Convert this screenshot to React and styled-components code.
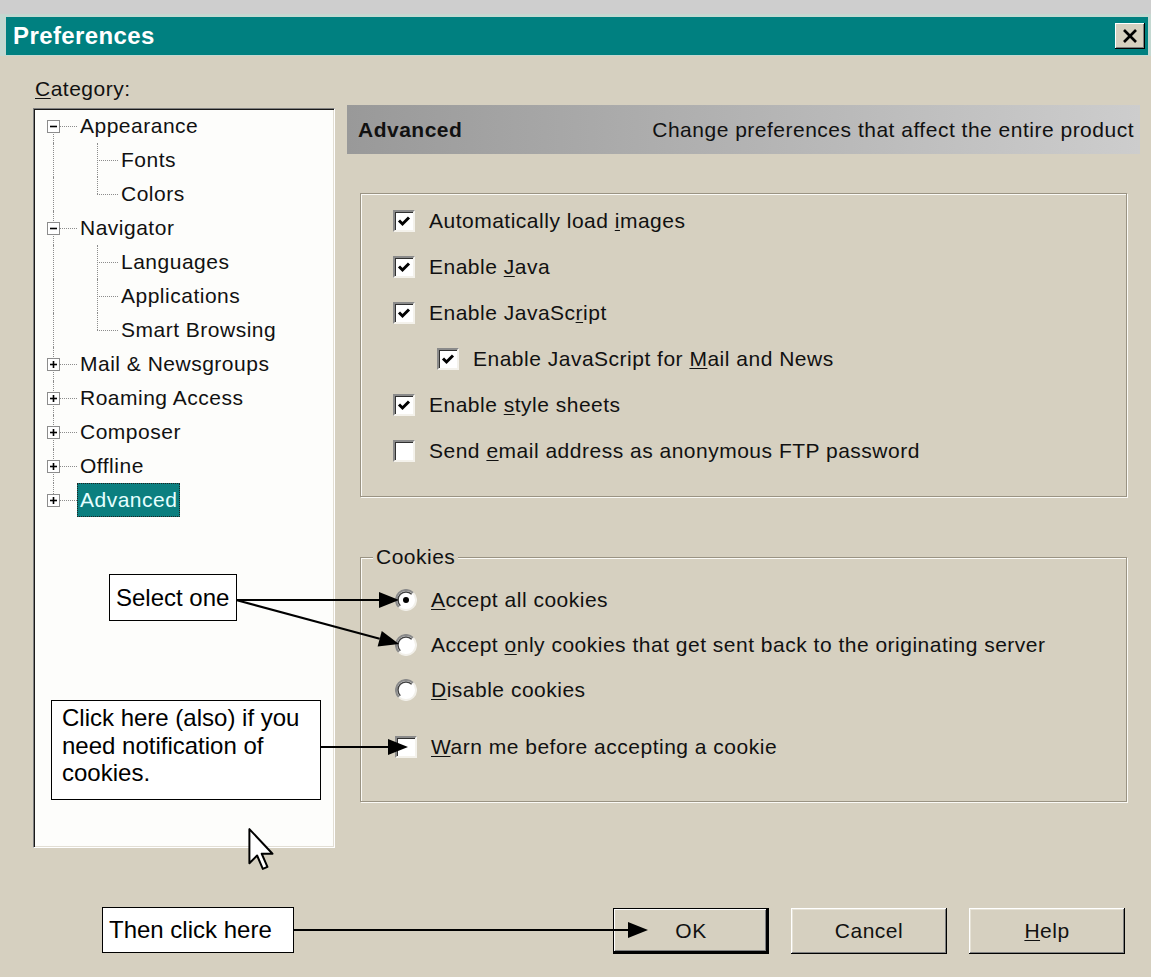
import React from 'react'
import styled, { createGlobalStyle, css } from 'styled-components'

const GlobalStyle = createGlobalStyle`
  html, body { margin: 0; padding: 0; }
  body {
    width: 1151px;
    height: 977px;
    overflow: hidden;
    background: #d6d0c0;
    font-family: "Liberation Sans", Arial, sans-serif;
    color: #111;
  }
`

const tree = [
  { label: 'Appearance', open: true, children: ['Fonts', 'Colors'] },
  { label: 'Navigator', open: true, children: ['Languages', 'Applications', 'Smart Browsing'] },
  { label: 'Mail & Newsgroups' },
  { label: 'Roaming Access' },
  { label: 'Composer' },
  { label: 'Offline' },
  { label: 'Advanced', selected: true },
]

const Checkmark = () => (
  <svg width="14" height="14" viewBox="0 0 14 14">
    <polyline points="2,6.5 5.5,10 12,3.5" fill="none" stroke="#000" strokeWidth="3" />
  </svg>
)

const CheckBox = ({ checked }) => <Box>{checked && <Checkmark />}</Box>

const Radio = ({ checked }) => (
  <svg width="22" height="22" viewBox="0 0 22 22" style={{ flex: 'none' }}>
    <circle cx="11" cy="11" r="10" fill="#fff" />
    <path d="M3.9 18.1 A10 10 0 0 1 18.1 3.9" stroke="#8a8a8a" strokeWidth="2" fill="none" />
    <path d="M5.3 16.7 A8 8 0 0 1 16.7 5.3" stroke="#404040" strokeWidth="1.5" fill="none" />
    <path d="M18.1 3.9 A10 10 0 0 1 3.9 18.1" stroke="#f2f0ea" strokeWidth="2" fill="none" />
    {checked && <circle cx="11" cy="11" r="3" fill="#000" />}
  </svg>
)

const Expander = ({ open }) => (
  <ExpBox>
    <svg width="9" height="9" viewBox="0 0 9 9">
      <line x1="1" y1="4.5" x2="8" y2="4.5" stroke="#000" strokeWidth="1.6" />
      {!open && <line x1="4.5" y1="1" x2="4.5" y2="8" stroke="#000" strokeWidth="1.6" />}
    </svg>
  </ExpBox>
)

const Arrow = ({ x1, y1, x2, y2 }) => {
  const a = Math.atan2(y2 - y1, x2 - x1)
  const len = 20
  const half = 8
  const bx = x2 - len * Math.cos(a)
  const by = y2 - len * Math.sin(a)
  const px = half * Math.sin(a)
  const py = -half * Math.cos(a)
  return (
    <g>
      <line x1={x1} y1={y1} x2={bx} y2={by} stroke="#000" strokeWidth="2" />
      <polygon points={`${x2},${y2} ${bx + px},${by + py} ${bx - px},${by - py}`} fill="#000" />
    </g>
  )
}

const Cursor = () => (
  <CursorWrap>
    <svg width="27" height="44" viewBox="0 0 12 20">
      <path d="M0.5 0.5 L0.5 16 L4 12.5 L6.6 18.6 L8.7 17.7 L6.1 11.7 L11 11.7 Z" fill="#fff" stroke="#000" strokeWidth="0.9" strokeLinejoin="round" />
    </svg>
  </CursorWrap>
)

const App = () => {
  return (
    <Page>
      <GlobalStyle />
      <TopStrip />
      <TitleFrame>
        <TitleBar>
          <Title>Preferences</Title>
          <CloseButton>
            <svg width="16" height="14" viewBox="0 0 16 14">
              <line x1="2" y1="1" x2="14" y2="13" stroke="#000" strokeWidth="2.6" />
              <line x1="14" y1="1" x2="2" y2="13" stroke="#000" strokeWidth="2.6" />
            </svg>
          </CloseButton>
        </TitleBar>
      </TitleFrame>

      <Body>
        <LeftCol>
          <CategoryLabel><U>C</U>ategory:</CategoryLabel>
          <TreeBox>
            {tree.map((node, i) => {
              const trunk = i === 0 ? 'bottom' : i === tree.length - 1 ? 'top' : 'full'
              const kids = node.children || []
              return (
                <React.Fragment key={node.label}>
                  <TreeRow>
                    <Gutter $w={13} $x={6} $line={trunk}>
                      <Expander open={node.open} />
                    </Gutter>
                    <Gutter $w={17} $x={0} $line="none" $branch />
                    <NodeLabel $selected={node.selected}>{node.label}</NodeLabel>
                  </TreeRow>
                  {kids.map((kid, j) => (
                    <TreeRow key={kid}>
                      <Gutter $w={13} $x={6} $line={i === tree.length - 1 ? 'none' : 'full'} />
                      <Spacer />
                      <Gutter $w={27} $x={6} $line={j === kids.length - 1 ? 'top' : 'full'} $branch />
                      <NodeLabel>{kid}</NodeLabel>
                    </TreeRow>
                  ))}
                </React.Fragment>
              )
            })}
          </TreeBox>
        </LeftCol>

        <RightCol>
          <PanelHeader>
            <PanelTitle>Advanced</PanelTitle>
            <PanelDesc>Change preferences that affect the entire product</PanelDesc>
          </PanelHeader>

          <Group>
            <Option><CheckBox checked /><span>Automatically load <U>i</U>mages</span></Option>
            <Option><CheckBox checked /><span>Enable <U>J</U>ava</span></Option>
            <Option><CheckBox checked /><span>Enable JavaSc<U>r</U>ipt</span></Option>
            <Option $indent><CheckBox checked /><span>Enable JavaScript for <U>M</U>ail and News</span></Option>
            <Option><CheckBox checked /><span>Enable <U>s</U>tyle sheets</span></Option>
            <Option><CheckBox /><span>Send <U>e</U>mail address as anonymous FTP password</span></Option>
          </Group>

          <CookieGroup>
            <Legend>Cookies</Legend>
            <CookieList>
              <RadioOption><Radio checked /><span><U>A</U>ccept all cookies</span></RadioOption>
              <RadioOption><Radio /><span>Accept <U>o</U>nly cookies that get sent back to the originating server</span></RadioOption>
              <RadioOption><Radio /><span><U>D</U>isable cookies</span></RadioOption>
              <RadioOption $gap><CheckBox /><span><U>W</U>arn me before accepting a cookie</span></RadioOption>
            </CookieList>
          </CookieGroup>
        </RightCol>
      </Body>

      <Footer>
        <DlgButton $default>OK</DlgButton>
        <DlgButton>Cancel</DlgButton>
        <DlgButton><U>H</U>elp</DlgButton>
      </Footer>

      <Cursor />

      <ArrowLayer width="1151" height="977" viewBox="0 0 1151 977">
        <Arrow x1={236} y1={600} x2={399} y2={600} />
        <Arrow x1={236} y1={600} x2={399} y2={644} />
        <Arrow x1={321} y1={747} x2={408} y2={747} />
        <Arrow x1={294} y1={930} x2={648} y2={930} />
      </ArrowLayer>

      <Callout $left={109} $top={574} $w={128} $h={47}>Select one</Callout>
      <Callout $left={51} $top={700} $w={270} $h={100} $multi>
        Click here (also) if you need notification of cookies.
      </Callout>
      <Callout $left={102} $top={907} $w={192} $h={46}>Then click here</Callout>
    </Page>
  )
}

export default App

const Page = styled.div`
  position: relative;
  width: 1151px;
  height: 977px;
  overflow: hidden;
  font-size: 21px;
  letter-spacing: 0.5px;
`

const TopStrip = styled.div`
  height: 14px;
  background: #cecece;
`

const TitleFrame = styled.div`
  padding: 3px 3px 1px 6px;
  background: #c4d8d1;
`

const TitleBar = styled.div`
  height: 38px;
  background: #008080;
  display: flex;
  align-items: center;
  justify-content: space-between;
  padding: 0 3px 0 7px;
`

const Title = styled.div`
  color: #fff;
  font-weight: bold;
  font-size: 24px;
  letter-spacing: 0.4px;
`

const CloseButton = styled.div`
  width: 30px;
  height: 26px;
  box-sizing: border-box;
  background: #d6d0c0;
  display: flex;
  align-items: center;
  justify-content: center;
  box-shadow: inset -1px -1px 0 #000, inset 1px 1px 0 #fff, inset -2px -2px 0 #808080;
`

const Body = styled.div`
  display: flex;
  height: 792px;
  padding-left: 33px;
`

const LeftCol = styled.div`
  width: 302px;
  display: flex;
  flex-direction: column;
`

const CategoryLabel = styled.div`
  margin-top: 21px;
  padding-left: 2px;
  height: 31px;
  line-height: 24px;
`

const U = styled.span`
  text-decoration: underline;
  text-underline-offset: 2px;
  text-decoration-thickness: 1px;
`

const TreeBox = styled.div`
  flex: 1;
  background: #fdfdfb;
  border-top: 1px solid #808080;
  border-left: 1px solid #808080;
  border-right: 1px solid #fff;
  border-bottom: 1px solid #fff;
  box-shadow: inset 1px 1px 0 #1a1a1a, inset -1px -1px 0 #e2ded4;
  padding-left: 13px;
`

const TreeRow = styled.div`
  display: flex;
  align-items: center;
  height: 34px;
`

const Gutter = styled.span`
  position: relative;
  flex: none;
  align-self: stretch;
  width: ${p => p.$w}px;
  display: flex;
  align-items: center;

  &::before {
    content: '';
    position: absolute;
    display: ${p => (p.$line === 'none' ? 'none' : 'block')};
    left: ${p => p.$x}px;
    top: ${p => (p.$line === 'bottom' ? '50%' : '0')};
    bottom: ${p => (p.$line === 'top' ? '50%' : '0')};
    border-left: 1px dotted #8c8c8c;
  }

  &::after {
    content: '';
    position: absolute;
    display: ${p => (p.$branch ? 'block' : 'none')};
    left: ${p => p.$x}px;
    right: 0;
    top: 50%;
    border-top: 1px dotted #8c8c8c;
  }
`

const Spacer = styled.span`
  flex: none;
  width: 31px;
`

const ExpBox = styled.span`
  position: relative;
  z-index: 1;
  width: 13px;
  height: 13px;
  box-sizing: border-box;
  border: 1px solid #8c8c8c;
  background: #fff;
  display: flex;
  align-items: center;
  justify-content: center;
`

const NodeLabel = styled.span`
  align-self: stretch;
  display: flex;
  align-items: center;
  padding: 0 3px;
  white-space: nowrap;
  ${p => p.$selected && css`
    background: #0b7f7f;
    color: #e6ffff;
    outline: 1px dotted #222;
    outline-offset: -1px;
  `}
`

const RightCol = styled.div`
  width: 793px;
  margin-left: 12px;
  padding-top: 49px;
`

const PanelHeader = styled.div`
  height: 49px;
  display: flex;
  align-items: center;
  justify-content: space-between;
  padding: 0 6px 0 11px;
  background: linear-gradient(to right, #999999, #cdcdcd);
`

const PanelTitle = styled.span`
  font-weight: bold;
`

const PanelDesc = styled.span``

const Group = styled.div`
  margin: 39px 13px 0;
  height: 304px;
  box-sizing: border-box;
  border: 1px solid #9a9383;
  box-shadow: inset 1px 1px 0 #fbfaf6, 1px 1px 0 #fbfaf6;
  padding: 4px 0 0 32px;
`

const Option = styled.div`
  display: flex;
  align-items: center;
  gap: 14px;
  height: 46px;
  margin-left: ${p => (p.$indent ? '44px' : '0')};
`

const Box = styled.span`
  flex: none;
  width: 22px;
  height: 22px;
  box-sizing: border-box;
  background: #fff;
  border-top: 2px solid #8a8a8a;
  border-left: 2px solid #8a8a8a;
  border-right: 2px solid #f4f2ec;
  border-bottom: 2px solid #f4f2ec;
  box-shadow: inset 1px 1px 0 #303030;
  display: flex;
  align-items: center;
  justify-content: center;
`

const CookieGroup = styled.fieldset`
  margin: 48px 13px 0;
  padding: 0;
  min-width: 0;
  height: 257px;
  box-sizing: border-box;
  border: 1px solid #9a9383;
  box-shadow: inset 1px 1px 0 #fbfaf6, 1px 1px 0 #fbfaf6;
`

const Legend = styled.legend`
  margin-left: 12px;
  padding: 0 3px;
  line-height: 24px;
  background: #d6d0c0;
`

const CookieList = styled.div`
  padding: 8px 0 0 34px;
`

const RadioOption = styled.div`
  display: flex;
  align-items: center;
  gap: 14px;
  height: 45px;
  margin-top: ${p => (p.$gap ? '12px' : '0')};
`

const Footer = styled.div`
  display: flex;
  justify-content: flex-end;
  gap: 22px;
  padding: 60px 26px 0 0;
`

const DlgButton = styled.div`
  width: 156px;
  height: 46px;
  box-sizing: border-box;
  display: flex;
  align-items: center;
  justify-content: center;
  background: #d6d0c0;
  box-shadow: inset -1px -1px 0 #000, inset 1px 1px 0 #fff, inset -2px -2px 0 #808080, inset 2px 2px 0 #e6e2d6;
  ${p => p.$default && css`
    border: 1px solid #000;
    box-shadow: inset -2px -2px 0 #000, inset 1px 1px 0 #fff, inset -3px -3px 0 #808080;
  `}
`

const CursorWrap = styled.div`
  position: absolute;
  left: 248px;
  top: 828px;
  line-height: 0;
`

const ArrowLayer = styled.svg`
  position: absolute;
  left: 0;
  top: 0;
  pointer-events: none;
`

const Callout = styled.div`
  position: absolute;
  left: ${p => p.$left}px;
  top: ${p => p.$top}px;
  width: ${p => p.$w}px;
  height: ${p => p.$h}px;
  box-sizing: border-box;
  border: 1.5px solid #000;
  background: #fff;
  font-family: "Liberation Sans", Arial, sans-serif;
  font-size: 24px;
  letter-spacing: 0;
  line-height: 27.5px;
  color: #000;
  display: flex;
  align-items: ${p => (p.$multi ? 'flex-start' : 'center')};
  white-space: ${p => (p.$multi ? 'normal' : 'nowrap')};
  padding: ${p => (p.$multi ? '3px 8px 0 10px' : '0 6px')};
`
